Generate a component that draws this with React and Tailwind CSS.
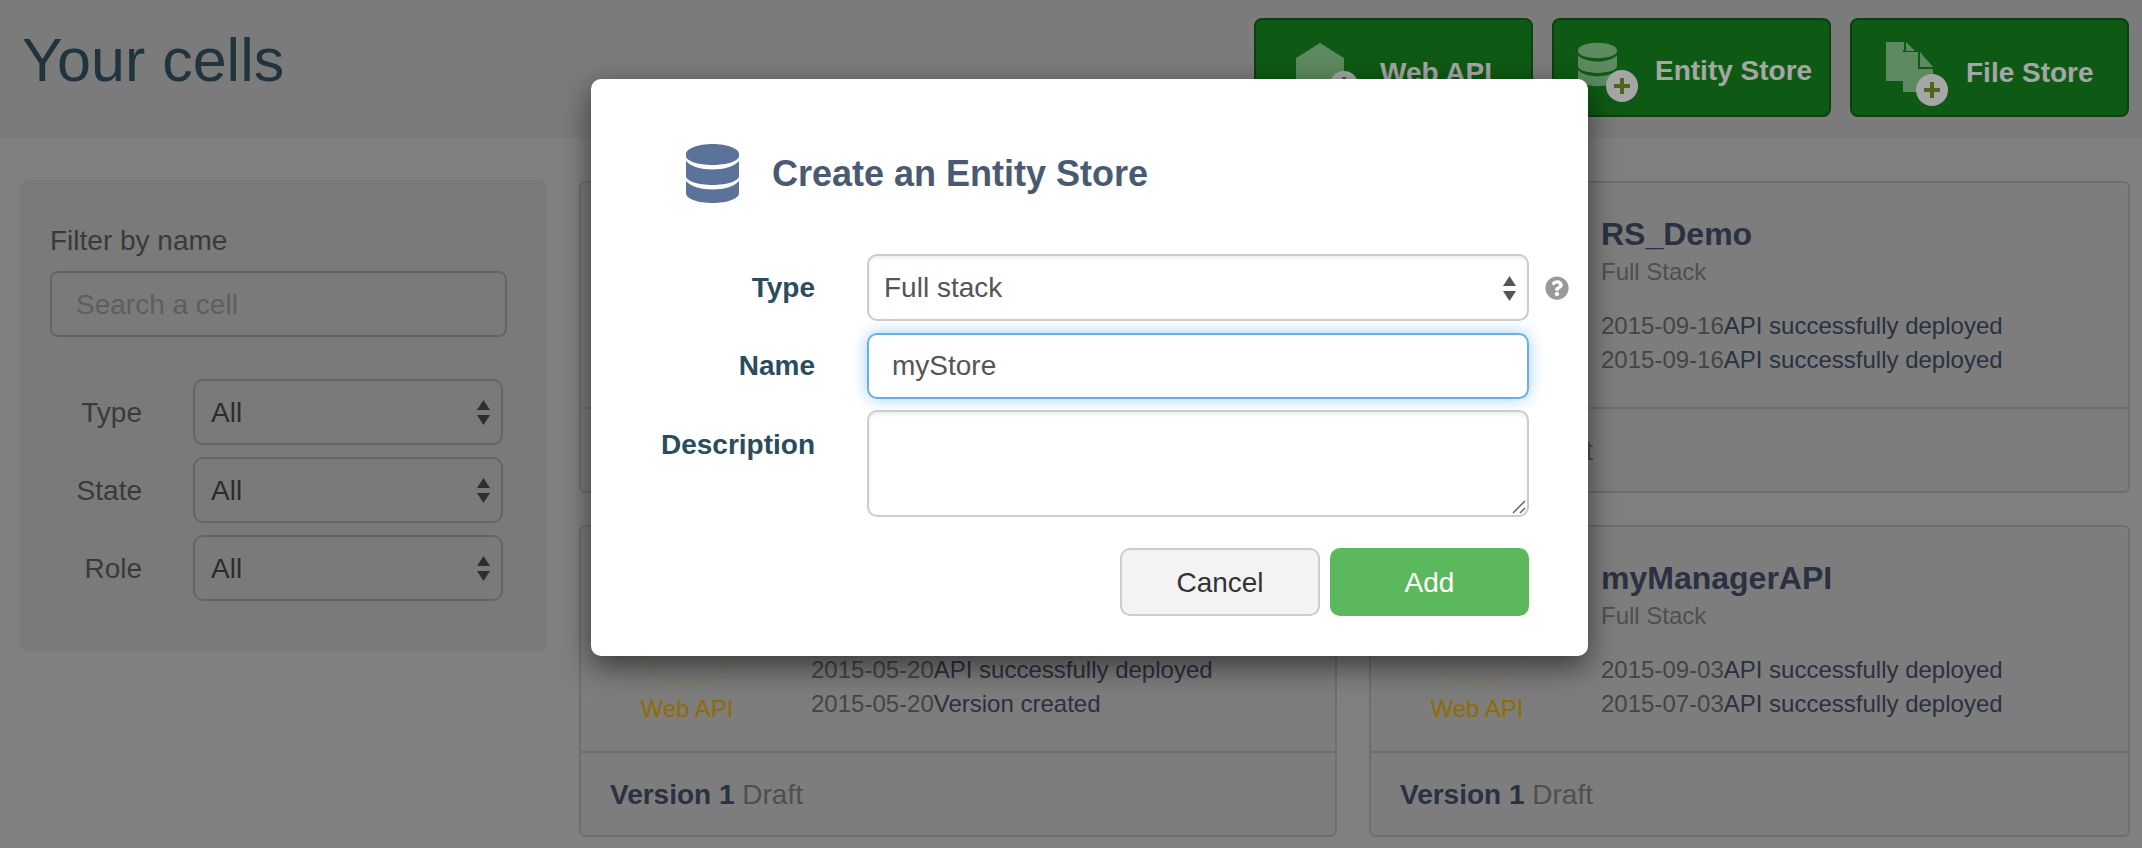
import { FaQuestionCircle } from "react-icons/fa";

function Db({ className, ...rest }) {
  return (
    <svg viewBox="0 0 53 59" className={className} fill="currentColor" {...rest}>
      <path d="M0 10C0 4.5 12 0 26.5 0S53 4.5 53 10V12C53 17 41 21 26.5 21S0 17 0 12Z" />
      <path d="M0 17C4 22 15 25.5 26.5 25.5S49 22 53 17V32C53 37 41 41 26.5 41S0 37 0 32Z" />
      <path d="M0 37C4 42 15 45.5 26.5 45.5S49 42 53 37V49C53 55 41 59 26.5 59S0 55 0 49Z" />
    </svg>
  );
}

function Plus({ cx, cy, r }) {
  return (
    <g>
      <circle cx={cx} cy={cy} r={r} fill="#ffffff" />
      <rect x={cx - 8} y={cy - 2} width="16" height="4" fill="#7a9a30" />
      <rect x={cx - 2} y={cy - 8} width="4" height="16" fill="#7a9a30" />
    </g>
  );
}

function WebIcon() {
  return (
    <svg viewBox="0 0 61 60" className="h-[60px] w-[61px] shrink-0">
      <path d="M24 0L48 15V50H0V15Z" fill="#8fd594" />
      <Plus cx={48} cy={42} r={14} />
    </svg>
  );
}

function StoreIcon() {
  return (
    <svg viewBox="0 0 60 60" className="h-[60px] w-[60px] shrink-0">
      <svg x="0" y="0" width="39" height="45" viewBox="0 0 53 59" fill="#8fd594">
        <path d="M0 10C0 4.5 12 0 26.5 0S53 4.5 53 10V12C53 17 41 21 26.5 21S0 17 0 12Z" />
        <path d="M0 17C4 22 15 25.5 26.5 25.5S49 22 53 17V32C53 37 41 41 26.5 41S0 37 0 32Z" />
        <path d="M0 37C4 42 15 45.5 26.5 45.5S49 42 53 37V49C53 55 41 59 26.5 59S0 55 0 49Z" />
      </svg>
      <Plus cx={44} cy={44} r={16} />
    </svg>
  );
}

function FileIcon() {
  return (
    <svg viewBox="0 0 63 64" className="h-[64px] w-[63px] shrink-0">
      <path d="M0 0H18V8H17V39H0Z" fill="#8fd594" />
      <path d="M20 0L29 9H20Z" fill="#8fd594" />
      <path d="M17 10H32V27H47V50H17Z" fill="#8fd594" />
      <path d="M34 10L47 25H34Z" fill="#8fd594" />
      <Plus cx={46} cy={48} r={16} />
    </svg>
  );
}

function Arrows({ className }) {
  return (
    <svg viewBox="0 0 13 25" className={`h-[25px] w-[13px] shrink-0 ${className}`} fill="currentColor">
      <path d="M6.5 0L13 10H0Z" />
      <path d="M0 15H13L6.5 25Z" />
    </svg>
  );
}

function FilterRow({ label }) {
  return (
    <div className="flex items-center">
      <div className="w-[92px] pt-px text-right text-[#5a5a5a]">{label}</div>
      <div className="ml-[51px] flex h-[66px] w-[310px] items-center justify-between rounded-[10px] border-2 border-[#9c9c9c] pl-[16px] pr-[11px] pt-px text-[#444444]">
        All
        <Arrows className="text-[#474747]" />
      </div>
    </div>
  );
}

// cards only carry what the open modal leaves visible
function Card({ title, subtitle, lines = [], badge, version = true }) {
  return (
    <div className="flex h-[312px] flex-col rounded-[6px] border-2 border-[#aaaaaa] bg-[#c0c0c0]">
      <div className="flex h-[226px] border-b-2 border-[#aaaaaa]">
        <div className="flex w-[212px] shrink-0 flex-col items-center pt-[53px]">
          {badge && (
            <>
              <div className="flex h-[105px] w-[105px] items-end justify-center rounded-full border-2 border-[#c9bd90] pb-[27px]">
                <svg viewBox="0 0 40 46" className="h-[46px] w-[40px] text-[#dca600]" fill="currentColor">
                  <path d="M20 0L40 11V35L20 46L0 35V11Z" />
                </svg>
              </div>
              <div className="mt-[9px] text-[24px] leading-[30px] text-[#dca600]">Web API</div>
            </>
          )}
        </div>
        <div className="ml-[18px] pt-[31px]">
          <div className="h-[40px] text-[32px] font-bold leading-[40px] text-[#3f4c66]">{title}</div>
          <div className="mt-[3px] h-[30px] text-[24px] leading-[30px] text-[#7a7a7a]">{subtitle}</div>
          <div className="mt-[22px] text-[24px] leading-[34px] text-[#3f4c66]">
            {lines.map(([date, text], i) => (
              <div key={i} className="flex">
                <span className="text-[#6a6a6a]">{date}</span>
                <span>{text}</span>
              </div>
            ))}
          </div>
        </div>
      </div>
      <div className="flex flex-1 items-center pl-[29px] pt-px text-[28px] text-[#7a7a7a]">
        {version && (
          <>
            <b className="font-bold text-[#3f4c66]">Version 1</b>&nbsp;Draft
          </>
        )}
      </div>
    </div>
  );
}

export default function App() {
  return (
    <div className="relative h-[848px] overflow-hidden bg-[#c5c5c5] font-['Liberation_Sans',Arial,sans-serif] text-[28px]">
      <header className="flex h-[138px] justify-between bg-[#bebebe] pl-[22px] pr-[13px] pt-[18px]">
        <h1 className="text-[61px] leading-[84px] text-[#34505f]">Your cells</h1>
        <div className="flex gap-[19px]">
          <button className="flex h-[99px] w-[279px] items-start rounded-[8px] border-2 border-[#10641a] bg-[#168a1f] pl-[40px] pt-[23px] font-bold text-white">
            <WebIcon />
            <span className="ml-[23px] mt-[10px] leading-[40px]">Web API</span>
          </button>
          <button className="flex h-[99px] w-[279px] items-start rounded-[8px] border-2 border-[#10641a] bg-[#168a1f] pl-[24px] pt-[22px] font-bold text-white">
            <StoreIcon />
            <span className="ml-[17px] mt-[9px] leading-[40px]">Entity Store</span>
          </button>
          <button className="flex h-[99px] w-[279px] items-start rounded-[8px] border-2 border-[#10641a] bg-[#168a1f] pl-[34px] pt-[22px] font-bold text-white">
            <FileIcon />
            <span className="ml-[17px] mt-[11px] leading-[40px]">File Store</span>
          </button>
        </div>
      </header>

      <main className="flex pl-[20px] pt-[42px]">
        <aside className="h-[471px] w-[527px] shrink-0 rounded-[8px] bg-[#bcbcbc] px-[30px] pt-[41px]">
          <div className="leading-[40px] text-[#5a5a5a]">Filter by name</div>
          <input
            placeholder="Search a cell"
            className="mt-[10px] h-[66px] w-[457px] rounded-[8px] border-2 border-[#9c9c9c] px-[24px] pt-px placeholder:text-[#919191]"
          />
          <div className="mt-[42px] flex flex-col gap-[12px]">
            <FilterRow label="Type" />
            <FilterRow label="State" />
            <FilterRow label="Role" />
          </div>
        </aside>
        <div className="ml-[32px] mt-px grid grid-cols-[758px_761px] gap-[32px]">
          <Card version={false} />
          <Card
            title="RS_Demo"
            subtitle="Full Stack"
            lines={[
              ["2015-09-16", "API successfully deployed"],
              ["2015-09-16", "API successfully deployed"],
            ]}
          />
          <Card
            badge
            lines={[
              ["2015-05-20", "API successfully deployed"],
              ["2015-05-20", "Version created"],
            ]}
          />
          <Card
            badge
            title="myManagerAPI"
            subtitle="Full Stack"
            lines={[
              ["2015-09-03", "API successfully deployed"],
              ["2015-07-03", "API successfully deployed"],
            ]}
          />
        </div>
      </main>

      <div className="absolute inset-0 bg-black/35" />

      <div className="absolute left-[591px] top-[79px] h-[577px] w-[997px] rounded-[10px] bg-white pl-[95px] pt-[65px] shadow-[0_10px_30px_rgba(0,0,0,0.55)]">
        <div className="flex h-[59px] items-center">
          <Db className="h-[59px] w-[53px] shrink-0 text-[#5b7299]" />
          <h2 className="ml-[33px] text-[36px] font-bold text-[#4b5a73]">Create an Entity Store</h2>
        </div>
        <div className="ml-[-95px] mt-[51px] grid grid-cols-[224px_662px] gap-x-[52px] gap-y-[11.5px]">
          <label className="self-center pt-px text-right font-bold text-[#2a4d5e]">Type</label>
          <div className="relative flex h-[67px] items-center justify-between rounded-[10px] border-2 border-[#cccccc] pl-[15px] pr-[11px] pt-px text-[#555555] shadow-[inset_0_2px_4px_rgba(0,0,0,0.075)]">
            Full stack
            <Arrows className="text-[#555555]" />
            <FaQuestionCircle className="absolute left-[676px] top-[20px] h-[24px] w-[24px] text-[#999999]" />
          </div>
          <label className="self-center pt-px text-right font-bold text-[#2a4d5e]">Name</label>
          <input
            defaultValue="myStore"
            className="h-[66px] rounded-[10px] border-2 border-[#66afe9] px-[23px] pt-px text-[#555555] shadow-[0_0_16px_rgba(102,175,233,0.6)] outline-none"
          />
          <label className="mt-[15px] text-right font-bold leading-[40px] text-[#2a4d5e]">Description</label>
          <div className="relative h-[107px]">
            <textarea className="h-full w-full resize-none rounded-[10px] border-2 border-[#cccccc] shadow-[inset_0_2px_4px_rgba(0,0,0,0.075)]" />
            <svg viewBox="0 0 14 14" className="absolute bottom-[3px] right-[3px] h-[14px] w-[14px]" stroke="#666666" strokeWidth="1.5">
              <path d="M1 13L13 1M8 13L13 8" />
            </svg>
          </div>
        </div>
        <div className="ml-[434px] mt-[31px] flex gap-[10px]">
          <button className="h-[68px] w-[200px] rounded-[10px] border-2 border-[#cccccc] bg-[#f3f3f3] pt-px text-[#333333]">Cancel</button>
          <button className="h-[68px] w-[199px] rounded-[10px] bg-[#5cb85c] pt-px text-white">Add</button>
        </div>
      </div>
    </div>
  );
}
